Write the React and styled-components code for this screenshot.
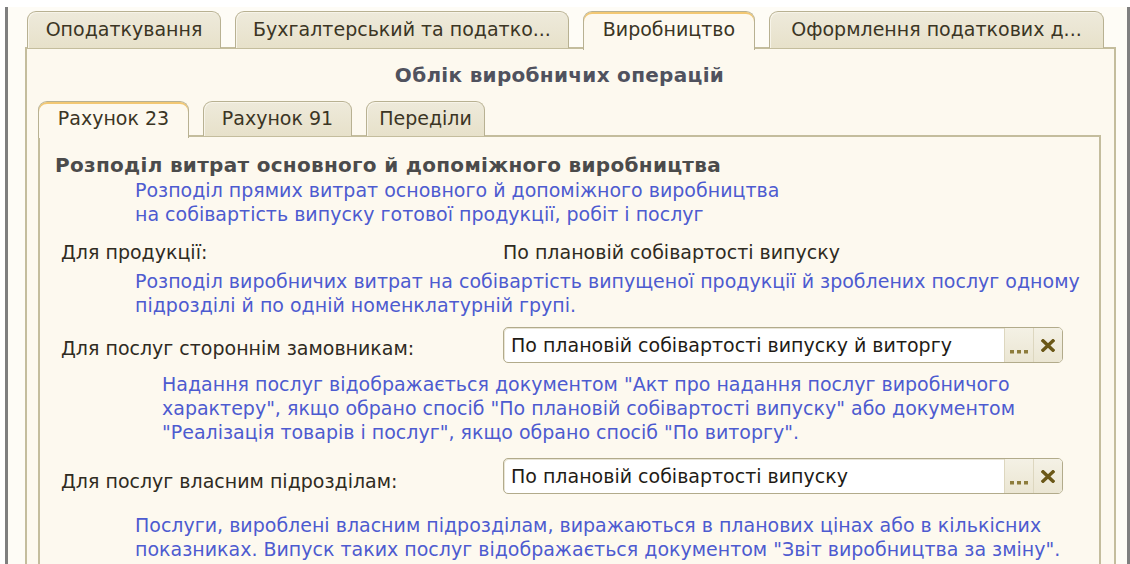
import React from "react";
import styled, { createGlobalStyle } from "styled-components";

const Global = createGlobalStyle`
  html, body { margin: 0; padding: 0; background: #ffffff; overflow: hidden; }
  body { font-family: "DejaVu Sans", Tahoma, sans-serif; }
`;

const Screen = styled.div`
  height: 564px;
  box-sizing: border-box;
  padding-top: 7px;
  background: #ffffff;
  overflow: hidden;
`;

const Form = styled.div`
  margin-left: 5px;
  height: 100%;
  box-sizing: border-box;
  border-left: 3px solid #7f7f7f;
  border-right: 3px solid #7f7f7f;
  background: #fefcf6;
  padding: 4px 11px 0 17px;
  display: flex;
  flex-direction: column;
`;

const TabStrip = styled.div`
  display: flex;
  gap: 14px;
  padding-left: ${(p) => p.$indent}px;
  height: ${(p) => p.$h}px;
  position: relative;
  z-index: 1;
  flex: none;
`;

const Tab = styled.div`
  width: ${(p) => p.$w}px;
  box-sizing: border-box;
  height: ${(p) => (p.$active ? "calc(100% + 2px)" : "100%")};
  border: 1px solid #b8b192;
  border-bottom: none;
  border-radius: 9px 9px 0 0;
  background: ${(p) =>
    p.$active ? "#fdf9ef" : "linear-gradient(#eeeadb, #e7e1ca)"};
  box-shadow: ${(p) =>
    p.$active ? "inset 0 2px 0 #f3c873" : "inset 1px 1px 0 #f7f4e9"};
  display: flex;
  align-items: center;
  justify-content: center;
  font-size: 19px;
  color: #3b3524;
  white-space: nowrap;
  overflow: hidden;
  padding-bottom: ${(p) => (p.$active ? 4 : 2)}px;
`;

const Panel = styled.div`
  flex: 1;
  box-sizing: border-box;
  border: 2px solid #c4bd9d;
  border-bottom: none;
  background: #fdf9ef;
  display: flex;
  flex-direction: column;
  min-height: 0;
`;

const OuterPanel = styled(Panel)`
  margin-top: -1px;
  padding: 0 13px 0 11px;
`;

const GroupTitle = styled.div`
  text-align: center;
  font-weight: bold;
  font-size: 20px;
  letter-spacing: 0.3px;
  line-height: 24px;
  color: #50525e;
  padding: 14px 20px 14px 0;
`;

const InnerPanel = styled(Panel)`
  margin-top: -1px;
  padding: 16px 0 0 15px;
`;

const SectionTitle = styled.div`
  font-weight: bold;
  font-size: 20px;
  letter-spacing: 0.3px;
  line-height: 24px;
  color: #4b4b4b;
  white-space: nowrap;
`;

const Note = styled.div`
  font-size: 19px;
  line-height: 24px;
  color: #4d5bd0;
  padding-left: ${(p) => p.$indent}px;
  margin-top: ${(p) => p.$top || 0}px;
  white-space: nowrap;
`;

const FieldRow = styled.div`
  display: grid;
  grid-template-columns: 442px 560px;
  align-items: center;
  padding-left: 6px;
  margin-top: ${(p) => p.$top || 0}px;
`;

const Label = styled.div`
  font-size: 19px;
  line-height: 24px;
  color: #2f2b22;
  white-space: nowrap;
  padding-top: ${(p) => p.$drop || 0}px;
`;

const Value = styled.div`
  font-size: 19px;
  line-height: 24px;
  color: #2f2b22;
  white-space: nowrap;
`;

const Input = styled.div`
  height: 36px;
  box-sizing: border-box;
  border: 1px solid #b2ab8b;
  border-radius: 5px;
  background: #ffffff;
  display: flex;
  overflow: hidden;
  box-shadow: inset 1px 1px 0 #e9e5d6;
`;

const InputText = styled.div`
  flex: 1;
  font-size: 19px;
  line-height: 34px;
  color: #1f1c16;
  padding-left: 7px;
  white-space: nowrap;
  overflow: hidden;
`;

const InputButton = styled.div`
  width: 29px;
  flex: none;
  border-left: 1px solid #ddd7bf;
  background: linear-gradient(#f4f1e5, #ebe6d3);
  display: flex;
  align-items: ${(p) => (p.$low ? "flex-end" : "center")};
  justify-content: center;
  padding-bottom: ${(p) => (p.$low ? 8 : 0)}px;
  box-sizing: border-box;
`;

const Dots = () => (
  <svg width="20" height="4" viewBox="0 0 20 4">
    <rect x="1" y="0" width="4" height="3.5" fill="#8d7c3c" />
    <rect x="8" y="0" width="4" height="3.5" fill="#8d7c3c" />
    <rect x="15" y="0" width="4" height="3.5" fill="#8d7c3c" />
  </svg>
);

const Cross = () => (
  <svg width="14" height="13" viewBox="0 0 14 13">
    <path
      d="M2 1.8 L12 11.2 M12 1.8 L2 11.2"
      stroke="#6b5818"
      strokeWidth="3.4"
      strokeLinecap="square"
    />
  </svg>
);

const ChoiceField = ({ text }) => (
  <Input>
    <InputText>{text}</InputText>
    <InputButton $low>
      <Dots />
    </InputButton>
    <InputButton>
      <Cross />
    </InputButton>
  </Input>
);

const topTabs = [
  { t: "Оподаткування", w: 194 },
  { t: "Бухгалтерський та податко...", w: 334 },
  { t: "Виробництво", w: 172, active: true },
  { t: "Оформлення податкових д...", w: 335 },
];

const innerTabs = [
  { t: "Рахунок 23", w: 151, active: true },
  { t: "Рахунок 91", w: 149 },
  { t: "Переділи", w: 119 },
];

export default function App() {
  return (
    <>
      <Global />
      <Screen>
        <Form>
          <TabStrip $indent={2} $h={37}>
            {topTabs.map((x) => (
              <Tab key={x.t} $w={x.w} $active={x.active}>
                {x.t}
              </Tab>
            ))}
          </TabStrip>
          <OuterPanel>
            <GroupTitle>Облік виробничих операцій</GroupTitle>
            <TabStrip $indent={0} $h={35}>
              {innerTabs.map((x) => (
                <Tab key={x.t} $w={x.w} $active={x.active}>
                  {x.t}
                </Tab>
              ))}
            </TabStrip>
            <InnerPanel>
              <SectionTitle>
                Розподіл витрат основного й допоміжного виробництва
              </SectionTitle>
              <Note $indent={80} $top={1}>
                Розподіл прямих витрат основного й допоміжного виробництва
                <br />
                на собівартість випуску готової продукції, робіт і послуг
              </Note>
              <FieldRow $top={14}>
                <Label>Для продукції:</Label>
                <Value>По плановій собівартості випуску</Value>
              </FieldRow>
              <Note $indent={80} $top={5}>
                Розподіл виробничих витрат на собівартість випущеної продукції й
                зроблених послуг одному
                <br />
                підрозділі й по одній номенклатурній групі.
              </Note>
              <FieldRow $top={10}>
                <Label $drop={6}>Для послуг стороннім замовникам:</Label>
                <ChoiceField text="По плановій собівартості випуску й виторгу" />
              </FieldRow>
              <Note $indent={107} $top={9}>
                Надання послуг відображається документом "Акт про надання послуг
                виробничого
                <br />
                характеру", якщо обрано спосіб "По плановій собівартості випуску"
                або документом
                <br />
                "Реалізація товарів і послуг", якщо обрано спосіб "По виторгу".
              </Note>
              <FieldRow $top={14}>
                <Label $drop={10}>Для послуг власним підрозділам:</Label>
                <ChoiceField text="По плановій собівартості випуску" />
              </FieldRow>
              <Note $indent={80} $top={19}>
                Послуги, вироблені власним підрозділам, виражаються в планових
                цінах або в кількісних
                <br />
                показниках. Випуск таких послуг відображається документом "Звіт
                виробництва за зміну".
              </Note>
            </InnerPanel>
          </OuterPanel>
        </Form>
      </Screen>
    </>
  );
}
